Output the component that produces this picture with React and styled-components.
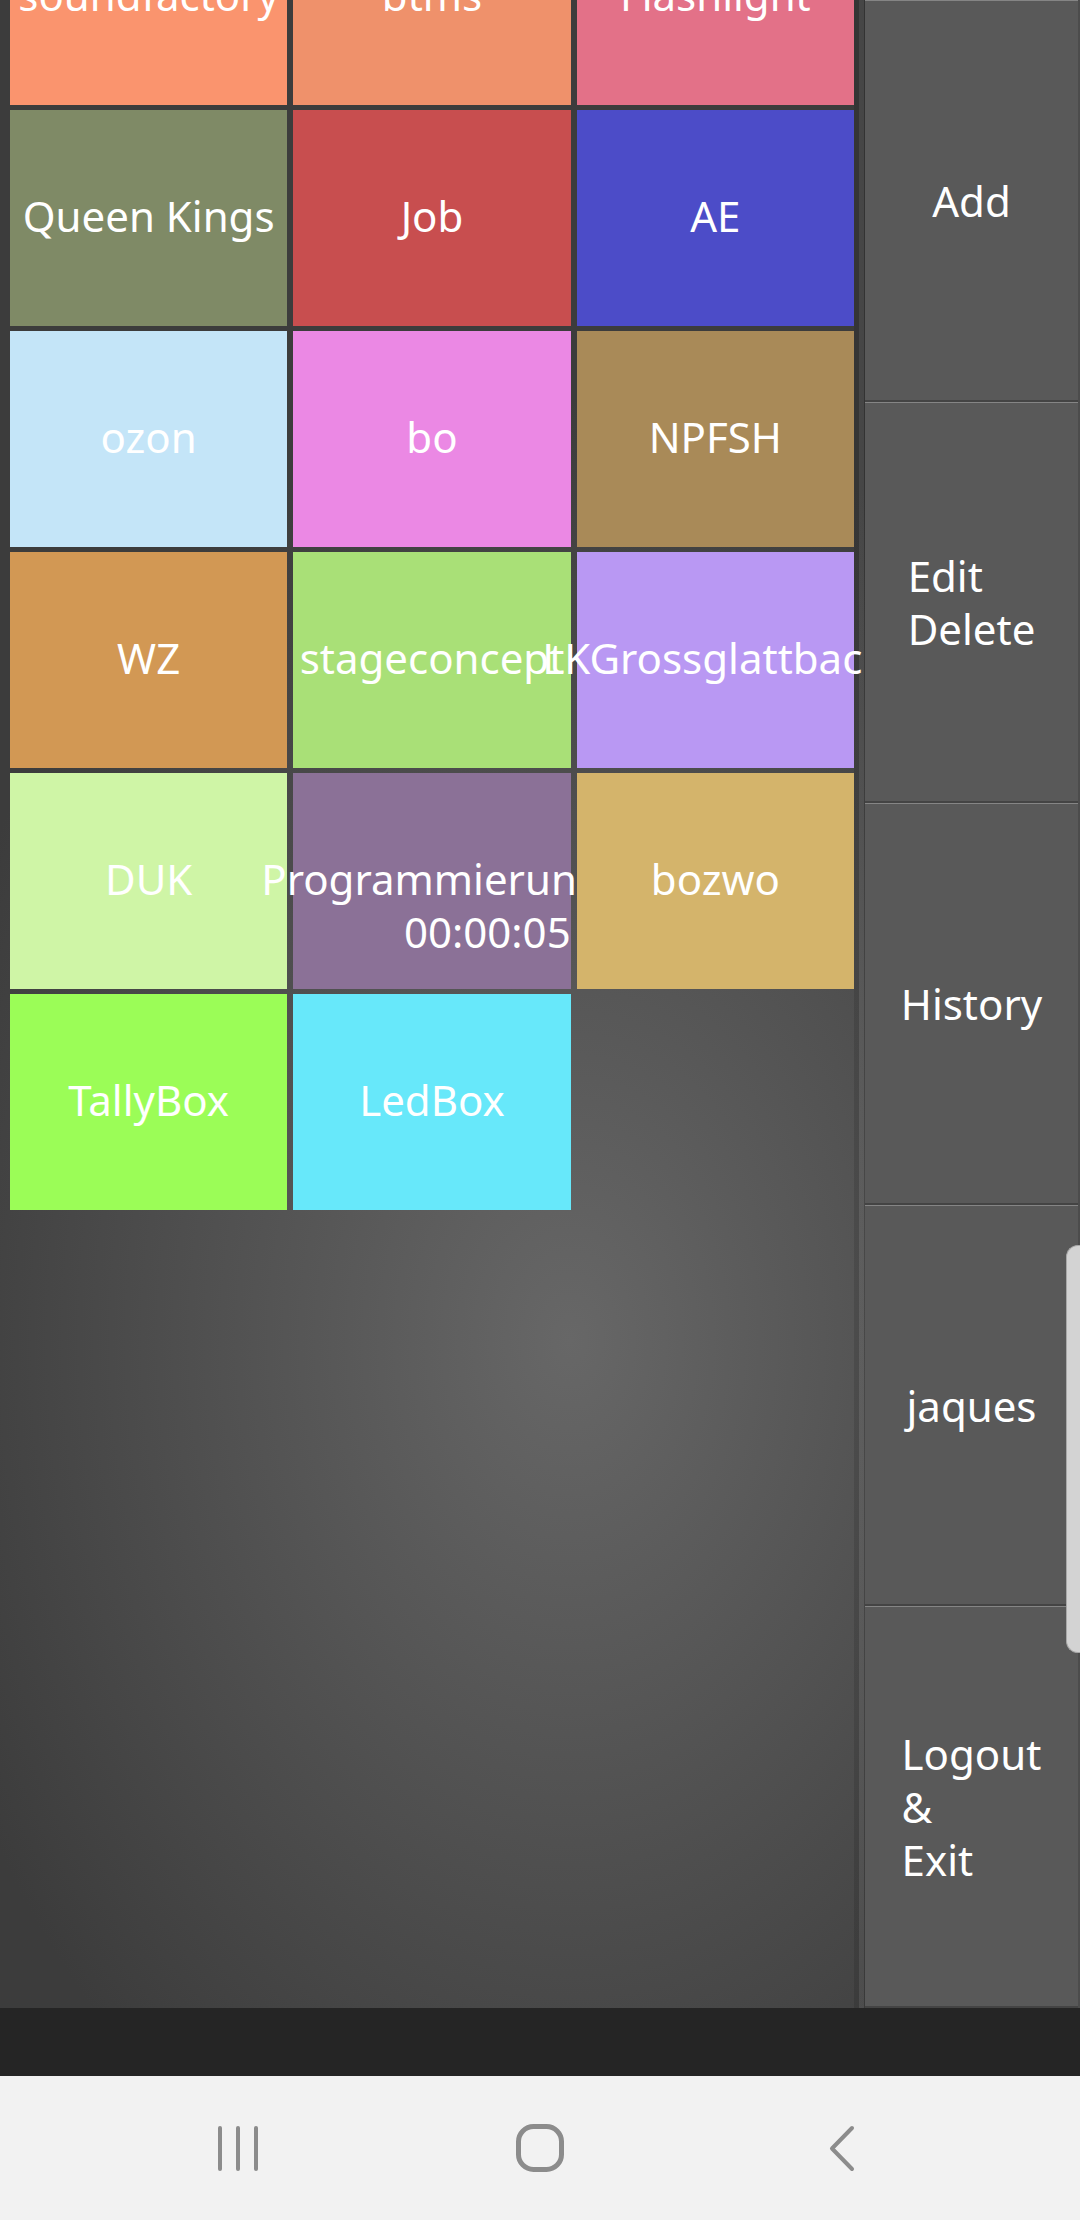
import React from 'react'
import styled, { createGlobalStyle } from 'styled-components'

const GlobalStyle = createGlobalStyle`
  html, body {
    margin: 0;
    padding: 0;
    background: #252525;
  }
  body {
    font-family: "Noto Sans", "Open Sans", sans-serif;
  }
`

const tiles = [
  { name: 'soundfactory', color: '#fa946e' },
  { name: 'btms', color: '#ef916b' },
  { name: 'Flashlight', color: '#e37188' },
  { name: 'Queen Kings', color: '#7f8a66' },
  { name: 'Job', color: '#c84e4f' },
  { name: 'AE', color: '#4c4cc8' },
  { name: 'ozon', color: '#c4e5f8' },
  { name: 'bo', color: '#eb88e4' },
  { name: 'NPFSH', color: '#a98a58' },
  { name: 'WZ', color: '#d29854' },
  { name: 'stageconcept', color: '#a9e077' },
  { name: 'LKGrossglattbach', color: '#b998f3' },
  { name: 'DUK', color: '#cff5a6' },
  { name: 'Programmierung', color: '#8b7197', timer: '00:00:05' },
  { name: 'bozwo', color: '#d4b46b' },
  { name: 'TallyBox', color: '#9bfd57' },
  { name: 'LedBox', color: '#67e8fa' },
]

const actions = [
  ['Add'],
  ['Edit', 'Delete'],
  ['History'],
  ['jaques'],
  ['Logout', '&', 'Exit'],
]

const Screen = styled.div`
  width: 1080px;
  height: 2220px;
  display: flex;
  flex-direction: column;
  overflow: hidden;
`

const Main = styled.div`
  height: 2008px;
  display: flex;
  overflow: hidden;
  background: radial-gradient(ellipse 680px 940px at 570px 1340px, #676767 0%, #3c3c3c 100%);
`

const GridArea = styled.div`
  flex: 0 0 854px;
`

// list is scrolled, first row sits partly above the top edge
const TileGrid = styled.div`
  display: grid;
  grid-template-columns: repeat(3, minmax(0, 1fr));
  grid-auto-rows: 216px;
  column-gap: 6px;
  row-gap: 5px;
  margin: -111px 0 0 10px;
`

const Tile = styled.div`
  min-width: 0;
  box-sizing: border-box;
  padding-bottom: 5px;
  background: ${p => p.$color};
  display: grid;
  grid-template-columns: minmax(0, 1fr);
  grid-template-rows: 1fr auto 1fr;
  clip-path: inset(0 -9px 0 -200px);
  color: #fff;
  font-size: 42px;
  line-height: 53px;
`

const Label = styled.span`
  grid-row: 2;
  justify-self: unsafe center;
  white-space: nowrap;
`

const Timer = styled.span`
  grid-row: 3;
  align-self: start;
  justify-self: end;
  white-space: nowrap;
`

const Divider = styled.div`
  flex: 0 0 11px;
  background: linear-gradient(to right, rgba(0, 0, 0, 0.12) 0 5px, rgba(255, 255, 255, 0.05) 5px 10px, rgba(0, 0, 0, 0.15) 10px);
`

const Sidebar = styled.div`
  flex: 1;
  position: relative;
  display: flex;
  flex-direction: column;
  padding-right: 2px;
  background: #4c4c4c;
`

const SideButton = styled.div`
  flex: 1;
  display: flex;
  align-items: center;
  justify-content: center;
  background: #595959;
  border-top: 1px solid #858585;
  border-bottom: 2px solid #444;
  color: #fff;
  font-size: 42px;
  line-height: 53px;
`

const SideLabel = styled.div`
  text-align: left;
`

const EdgeHandle = styled.div`
  position: absolute;
  right: 0;
  top: 1245px;
  width: 13px;
  height: 406px;
  background: #d3d3d3;
  border: 1px solid #a8a8a8;
  border-right: none;
  border-radius: 12px 0 0 12px;
`

const StatusStrip = styled.div`
  height: 68px;
  background: #252525;
`

const NavBar = styled.div`
  height: 144px;
  background: #f2f2f2;
  display: flex;
  justify-content: center;
  align-items: center;
`

const NavSlot = styled.div`
  width: 302px;
  display: flex;
  justify-content: center;
  align-items: center;
  color: #8c8c8c;
`

const RecentsIcon = () => (
  <svg width="42" height="47" viewBox="0 0 42 47" fill="none" stroke="currentColor" strokeWidth="4" strokeLinecap="round">
    <line x1="3" y1="3" x2="3" y2="44" />
    <line x1="21" y1="3" x2="21" y2="44" />
    <line x1="39" y1="3" x2="39" y2="44" />
  </svg>
)

const HomeIcon = () => (
  <svg width="48" height="48" viewBox="0 0 48 48" fill="none" stroke="currentColor" strokeWidth="5">
    <rect x="2.5" y="2.5" width="43" height="43" rx="15" />
  </svg>
)

const BackIcon = () => (
  <svg width="28" height="47" viewBox="0 0 28 47" fill="none" stroke="currentColor" strokeWidth="4" strokeLinecap="round" strokeLinejoin="round">
    <polyline points="24,3 4,23.5 24,44" />
  </svg>
)

export default function App() {
  return (
    <>
      <GlobalStyle />
      <Screen>
        <Main>
          <GridArea>
            <TileGrid>
              {tiles.map(t => (
                <Tile key={t.name} $color={t.color}>
                  <Label>{t.name}</Label>
                  {t.timer && <Timer>{t.timer}</Timer>}
                </Tile>
              ))}
            </TileGrid>
          </GridArea>
          <Divider />
          <Sidebar>
            {actions.map(lines => (
              <SideButton key={lines.join(' ')}>
                <SideLabel>
                  {lines.map(l => <div key={l}>{l}</div>)}
                </SideLabel>
              </SideButton>
            ))}
            <EdgeHandle />
          </Sidebar>
        </Main>
        <StatusStrip />
        <NavBar>
          <NavSlot><RecentsIcon /></NavSlot>
          <NavSlot><HomeIcon /></NavSlot>
          <NavSlot><BackIcon /></NavSlot>
        </NavBar>
      </Screen>
    </>
  )
}
